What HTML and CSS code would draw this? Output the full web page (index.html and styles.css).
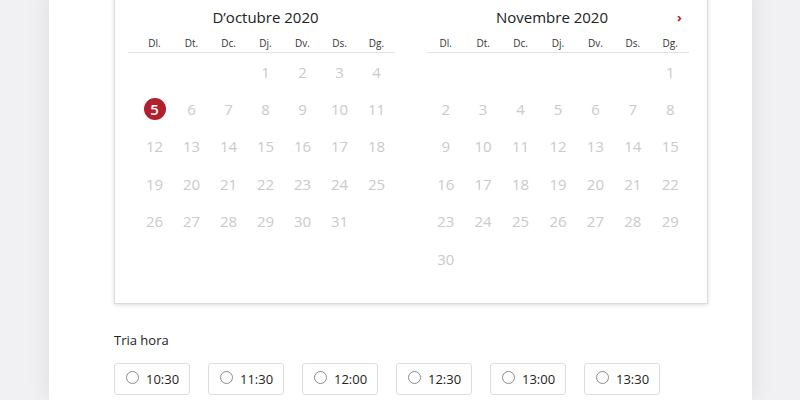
FILE: index.html
```html
<!DOCTYPE html>
<html lang="ca">
<head>
    <meta charset="UTF-8">
    <meta name="viewport" content="width=device-width, initial-scale=1.0">
    <title>Reserva</title>
    <link rel="stylesheet" href="styles.css">
</head>
<body>
    <div class="panel">
        <div class="calendar">
            <div class="month first">
                <div class="month-head">
                    <span class="month-title">D’octubre 2020</span>
                </div>
                <div class="weekdays">
                    <span>Dl.</span><span>Dt.</span><span>Dc.</span><span>Dj.</span><span>Dv.</span><span>Ds.</span><span>Dg.</span>
                </div>
                <div class="days">
                    <span></span><span></span><span></span><span>1</span><span>2</span><span>3</span><span>4</span>
                    <span><b class="today">5</b></span><span>6</span><span>7</span><span>8</span><span>9</span><span>10</span><span>11</span>
                    <span>12</span><span>13</span><span>14</span><span>15</span><span>16</span><span>17</span><span>18</span>
                    <span>19</span><span>20</span><span>21</span><span>22</span><span>23</span><span>24</span><span>25</span>
                    <span>26</span><span>27</span><span>28</span><span>29</span><span>30</span><span>31</span><span></span>
                </div>
            </div>
            <div class="month second">
                <div class="month-head">
                    <span class="month-title">Novembre 2020</span>
                    <span class="next">&#8250;</span>
                </div>
                <div class="weekdays">
                    <span>Dl.</span><span>Dt.</span><span>Dc.</span><span>Dj.</span><span>Dv.</span><span>Ds.</span><span>Dg.</span>
                </div>
                <div class="days">
                    <span></span><span></span><span></span><span></span><span></span><span></span><span>1</span>
                    <span>2</span><span>3</span><span>4</span><span>5</span><span>6</span><span>7</span><span>8</span>
                    <span>9</span><span>10</span><span>11</span><span>12</span><span>13</span><span>14</span><span>15</span>
                    <span>16</span><span>17</span><span>18</span><span>19</span><span>20</span><span>21</span><span>22</span>
                    <span>23</span><span>24</span><span>25</span><span>26</span><span>27</span><span>28</span><span>29</span>
                    <span>30</span>
                </div>
            </div>
        </div>

        <p class="label">Tria hora</p>
        <div class="times">
            <label class="slot"><span class="radio"></span>10:30</label>
            <label class="slot"><span class="radio"></span>11:30</label>
            <label class="slot"><span class="radio"></span>12:00</label>
            <label class="slot"><span class="radio"></span>12:30</label>
            <label class="slot"><span class="radio"></span>13:00</label>
            <label class="slot"><span class="radio"></span>13:30</label>
        </div>
    </div>
</body>
</html>
```

FILE: styles.css
```css
body {
    margin: 0;
    background: #f1f1f3;
    font-family: "Open Sans", Arial, sans-serif;
    color: #222;
    overflow: hidden;
}
.panel {
    width: 703px;
    height: 410px;
    margin-left: 49px;
    padding-left: 65px;
    box-sizing: border-box;
    background: #fff;
    box-shadow: 0 0 22px rgba(0, 0, 0, 0.09);
}
.calendar {
    width: 594px;
    margin-top: -10px;
    box-sizing: border-box;
    padding: 16px 18px 26px 13px;
    display: flex;
    gap: 32px;
    align-items: flex-start;
    border: 1px solid #dcdcdc;
    box-shadow: 0 1px 4px rgba(0, 0, 0, 0.14);
}
.month.first {
    width: 267px;
}
.month.second {
    width: 262px;
}
.month.first .month-head,
.month.first .weekdays,
.month.first .days {
    padding-left: 8px;
}
.month-head {
    display: flex;
    height: 20px;
    line-height: 20px;
}
.month-title {
    flex: 1;
    text-align: center;
    font-size: 15px;
}
.next {
    width: 12px;
    color: #b3202d;
    font-weight: 700;
    font-size: 13px;
}
.weekdays {
    display: grid;
    grid-template-columns: repeat(7, 1fr);
    margin-top: 7px;
    height: 18px;
    line-height: 18px;
    border-bottom: 1px solid #e2e2e2;
    font-size: 10px;
    text-align: center;
    color: #333;
}
.days {
    display: grid;
    grid-template-columns: repeat(7, 1fr);
    grid-auto-rows: 37.4px;
    height: 224.4px;
    font-size: 15px;
    color: #cacaca;
}
.days span {
    display: flex;
    align-items: center;
    justify-content: center;
}
.today {
    width: 22px;
    height: 22px;
    border-radius: 50%;
    background: #b3202d;
    color: #fff;
    font-weight: 600;
    display: flex;
    align-items: center;
    justify-content: center;
}
.label {
    margin: 27px 0 0;
    font-size: 13px;
    line-height: 18px;
}
.times {
    display: flex;
    gap: 18px;
    margin-top: 14px;
}
.slot {
    width: 76px;
    height: 32px;
    box-sizing: border-box;
    display: flex;
    align-items: center;
    padding-left: 11px;
    border: 1px solid #dedede;
    border-radius: 3px;
    font-size: 13px;
}
.radio {
    width: 11px;
    height: 11px;
    border: 1px solid #8c8c8c;
    border-radius: 50%;
    margin-right: 7px;
    margin-top: -3px;
}
```
